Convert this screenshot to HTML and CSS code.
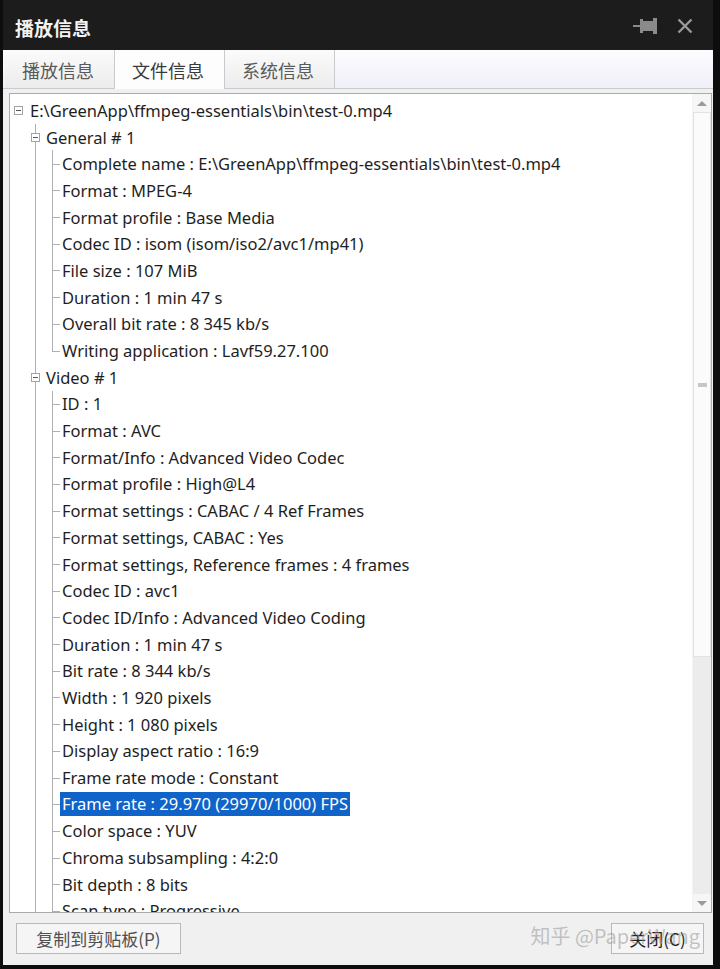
FILE: index.html
```html
<!DOCTYPE html>
<html lang="zh-CN">
<head>
    <meta charset="UTF-8">
    <title>播放信息</title>
    <link rel="stylesheet" href="styles.css">
</head>
<body>
    <div class="window">
        <div class="titlebar">
            <span class="title">播放信息</span>
            <div class="title-icons">
                <svg class="pin" width="26" height="16" viewBox="0 0 26 16">
                    <rect x="0" y="7" width="8" height="2" fill="#8a8a8a"/>
                    <rect x="7" y="1" width="3" height="14" fill="#8a8a8a"/>
                    <rect x="10" y="3" width="11" height="10" fill="#8a8a8a"/>
                    <rect x="20" y="0" width="4" height="16" fill="#8a8a8a"/>
                </svg>
                <svg class="close" width="16" height="16" viewBox="0 0 16 16">
                    <path d="M1.5 1.5 L14.5 14.5 M14.5 1.5 L1.5 14.5" stroke="#9a9a9a" stroke-width="2.4" fill="none"/>
                </svg>
            </div>
        </div>

        <div class="tabs">
            <div class="tab">播放信息</div>
            <div class="tab active">文件信息</div>
            <div class="tab">系统信息</div>
        </div>

        <div class="panel">
            <div class="tree">
                <div class="row root"><span class="box"></span><span class="text">E:\GreenApp\ffmpeg-essentials\bin\test-0.mp4</span></div>

                <div class="group">
                    <div class="row head"><span class="box"></span><span class="text">General # 1</span></div>
                    <div class="leaf"><span class="text">Complete name : E:\GreenApp\ffmpeg-essentials\bin\test-0.mp4</span></div>
                    <div class="leaf"><span class="text">Format : MPEG-4</span></div>
                    <div class="leaf"><span class="text">Format profile : Base Media</span></div>
                    <div class="leaf"><span class="text">Codec ID : isom (isom/iso2/avc1/mp41)</span></div>
                    <div class="leaf"><span class="text">File size : 107 MiB</span></div>
                    <div class="leaf"><span class="text">Duration : 1 min 47 s</span></div>
                    <div class="leaf"><span class="text">Overall bit rate : 8 345 kb/s</span></div>
                    <div class="leaf last"><span class="text">Writing application : Lavf59.27.100</span></div>
                </div>

                <div class="group">
                    <div class="row head"><span class="box"></span><span class="text">Video # 1</span></div>
                    <div class="leaf"><span class="text">ID : 1</span></div>
                    <div class="leaf"><span class="text">Format : AVC</span></div>
                    <div class="leaf"><span class="text">Format/Info : Advanced Video Codec</span></div>
                    <div class="leaf"><span class="text">Format profile : High@L4</span></div>
                    <div class="leaf"><span class="text">Format settings : CABAC / 4 Ref Frames</span></div>
                    <div class="leaf"><span class="text">Format settings, CABAC : Yes</span></div>
                    <div class="leaf"><span class="text">Format settings, Reference frames : 4 frames</span></div>
                    <div class="leaf"><span class="text">Codec ID : avc1</span></div>
                    <div class="leaf"><span class="text">Codec ID/Info : Advanced Video Coding</span></div>
                    <div class="leaf"><span class="text">Duration : 1 min 47 s</span></div>
                    <div class="leaf"><span class="text">Bit rate : 8 344 kb/s</span></div>
                    <div class="leaf"><span class="text">Width : 1 920 pixels</span></div>
                    <div class="leaf"><span class="text">Height : 1 080 pixels</span></div>
                    <div class="leaf"><span class="text">Display aspect ratio : 16:9</span></div>
                    <div class="leaf"><span class="text">Frame rate mode : Constant</span></div>
                    <div class="leaf selected"><span class="text">Frame rate : 29.970 (29970/1000) FPS</span></div>
                    <div class="leaf"><span class="text">Color space : YUV</span></div>
                    <div class="leaf"><span class="text">Chroma subsampling : 4:2:0</span></div>
                    <div class="leaf"><span class="text">Bit depth : 8 bits</span></div>
                    <div class="leaf"><span class="text">Scan type : Progressive</span></div>
                </div>
            </div>

            <div class="scrollbar">
                <div class="arrow up"></div>
                <div class="thumb"><span class="grip"></span></div>
                <div class="track"></div>
                <div class="arrow down"></div>
            </div>
        </div>

        <div class="footer">
            <div class="btn copy">复制到剪贴板(P)</div>
            <div class="btn close-btn">关闭(C)</div>
        </div>

        <div class="watermark">知乎 @PaperWang</div>
    </div>
</body>
</html>
```

FILE: styles.css
```css
body {
    margin: 0;
    background-color: #0d0d0d;
    font-family: "Noto Sans", "Noto Sans CJK SC", sans-serif;
}

.window {
    position: relative;
    width: 710px;
    height: 965px;
    margin-left: 3px;
    background-color: #f0f0f0;
    display: flex;
    flex-direction: column;
}

/* title bar */
.titlebar {
    height: 50px;
    background-color: #1c1c1c;
    display: flex;
    align-items: center;
    justify-content: space-between;
    padding: 0 20px 0 12px;
}

.title {
    color: #f2f2f2;
    font-family: "Noto Sans CJK SC", sans-serif;
    font-size: 19px;
    font-weight: bold;
    margin-top: 4px;
}

.title-icons {
    display: flex;
    align-items: center;
    gap: 18px;
    margin-top: 1px;
}

/* tabs */
.tabs {
    height: 38px;
    display: flex;
    padding-left: 2px;
    background: linear-gradient(#fdfdff, #efeff8);
    border-bottom: 1px solid #c9c9d0;
}

.tab {
    width: 110px;
    padding-left: 17px;
    box-sizing: border-box;
    font-family: "Noto Sans CJK SC", sans-serif;
    font-size: 18px;
    line-height: 40px;
    color: #5a5a5a;
    border-right: 1px solid #c9c9d0;
    background: linear-gradient(#fbfbfb, #ececec);
}

.tab.active {
    background: #fdfdfd;
    color: #3a3a3a;
    height: 39px;
}

/* tree panel */
.panel {
    height: 818px;
    margin: 4px 1px 0 6px;
    border: 1px solid #ababab;
    background-color: #fff;
    display: flex;
}

.tree {
    flex: 1;
    overflow: hidden;
    padding-top: 3px;
    font-size: 16.5px;
    color: #1e1e1e;
}

.row, .leaf {
    position: relative;
    height: 26.7px;
    display: flex;
    align-items: center;
    white-space: nowrap;
}

.box {
    position: relative;
    z-index: 1;
    width: 9px;
    height: 9px;
    box-sizing: border-box;
    border: 1px solid #a4a4a4;
    background-color: #fff;
}

.box::after {
    content: "";
    position: absolute;
    left: 1px;
    right: 1px;
    top: 3px;
    height: 1px;
    background-color: #555;
}

.root {
    padding-left: 4px;
}

.root .box {
    margin-right: 7px;
}

.head {
    padding-left: 21px;
}

.head .box {
    margin-right: 6px;
}

.group {
    position: relative;
}

.group::before {
    content: "";
    position: absolute;
    left: 25px;
    top: 0;
    bottom: 0;
    border-left: 1px solid #b0b0b0;
}

.leaf {
    padding-left: 52px;
}

.leaf::before {
    content: "";
    position: absolute;
    left: 42px;
    top: 0;
    bottom: 0;
    border-left: 1px solid #b0b0b0;
}

.leaf.last::before {
    bottom: 50%;
}

.leaf::after {
    content: "";
    position: absolute;
    left: 42px;
    width: 8px;
    top: 50%;
    border-top: 1px solid #b0b0b0;
}

.leaf.selected .text {
    background-color: #0f63c9;
    color: #fff;
    margin-left: -2px;
    padding: 0 2px;
    line-height: 24px;
}

/* scrollbar */
.scrollbar {
    width: 18px;
    display: flex;
    flex-direction: column;
    background-color: #ececec;
    border-left: 1px solid #f4f4f4;
}

.arrow {
    height: 18px;
    display: flex;
    align-items: center;
    justify-content: center;
    background-color: #f6f6f6;
}

.arrow.up::after {
    content: "";
    border: 5px solid transparent;
    border-bottom: 5px solid #9a9a9a;
    border-top: 0;
}

.arrow.down::after {
    content: "";
    border: 5px solid transparent;
    border-top: 5px solid #9a9a9a;
    border-bottom: 0;
}

.thumb {
    height: 545px;
    background-color: #fbfbfb;
    border: 1px solid #e2e2e2;
    box-sizing: border-box;
    display: flex;
    align-items: center;
    justify-content: center;
}

.grip {
    width: 9px;
    height: 4px;
    background-color: #c6c6c6;
}

.track {
    flex: 1;
}

/* footer */
.footer {
    flex: 1;
    display: flex;
    justify-content: space-between;
    align-items: center;
    padding: 0 9px 2px 13px;
}

.btn {
    height: 31px;
    box-sizing: border-box;
    border: 1px solid #b9b9b9;
    background-color: #f5f5f5;
    display: flex;
    align-items: center;
    justify-content: center;
    font-family: "Noto Sans CJK SC", sans-serif;
    font-size: 17px;
    color: #505050;
    white-space: nowrap;
}

.btn.copy {
    width: 165px;
}

.btn.close-btn {
    width: 93px;
    color: #222;
}

.watermark {
    position: absolute;
    right: 13px;
    bottom: 15px;
    font-family: "Noto Sans CJK SC", sans-serif;
    font-size: 20px;
    color: rgba(150, 150, 150, 0.55);
    pointer-events: none;
}
```
